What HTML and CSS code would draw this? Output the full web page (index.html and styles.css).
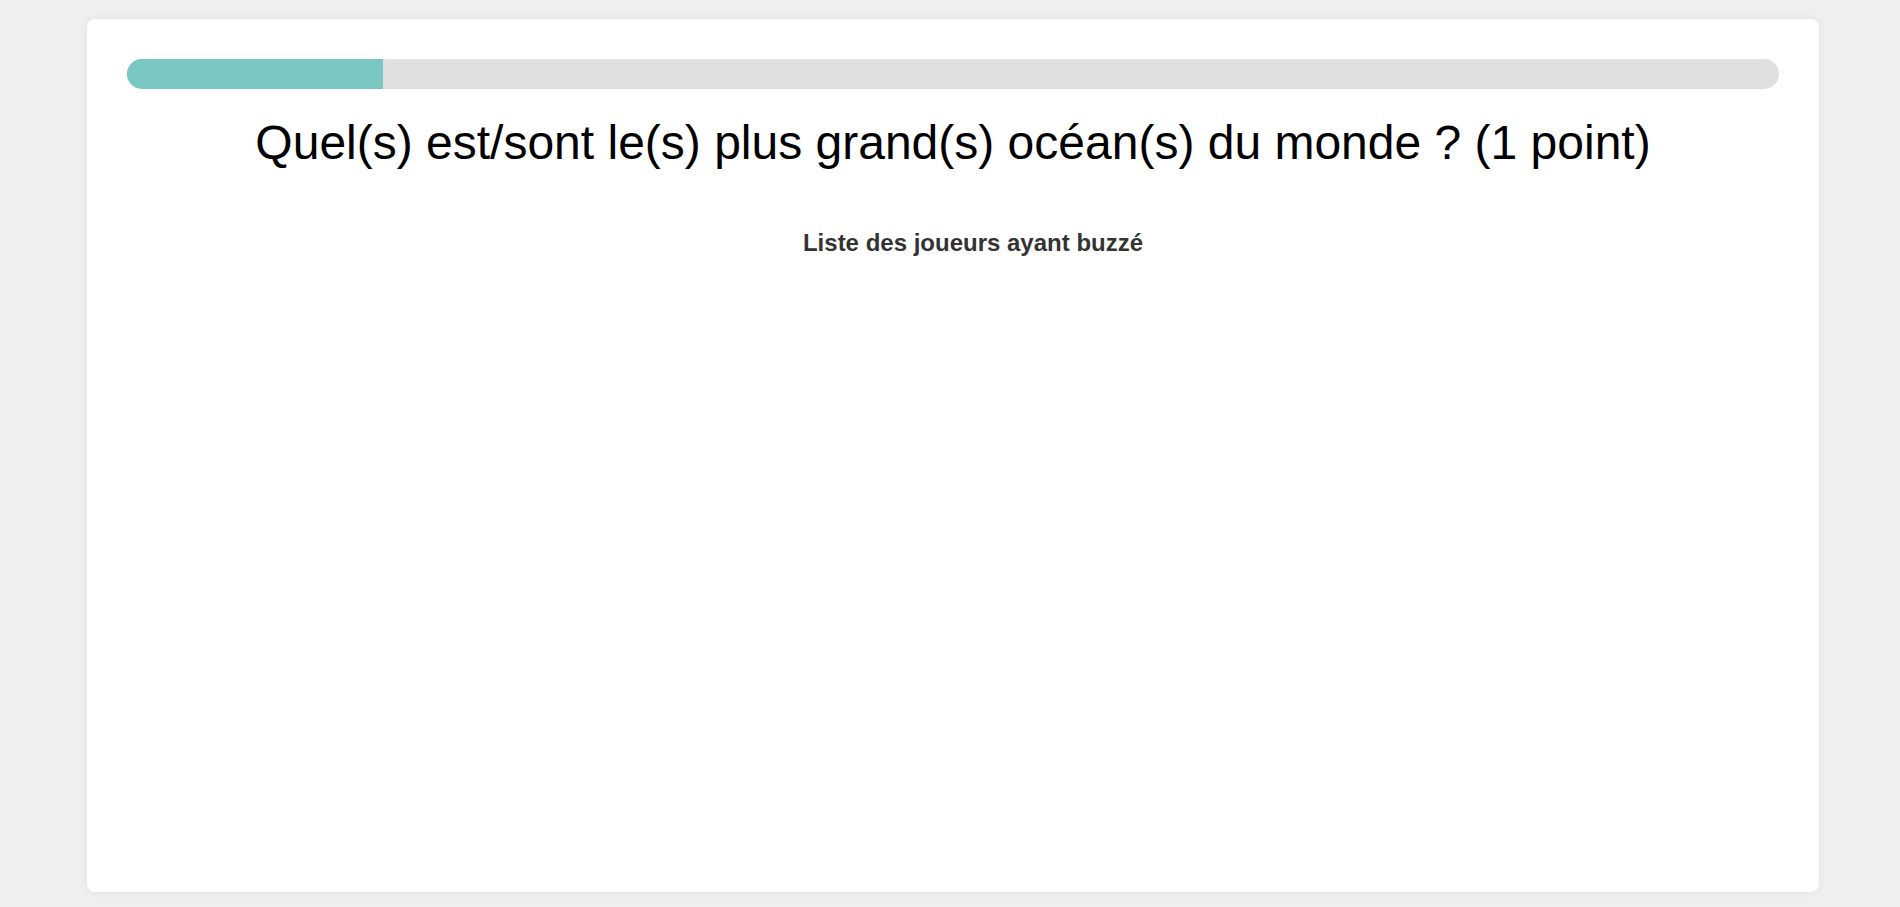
FILE: index.html
```html
<!DOCTYPE html>
<html lang="fr">
<head>
<meta charset="utf-8">
<title>Quiz</title>
<link rel="stylesheet" href="styles.css">
</head>
<body>
<main class="card">
  <div class="progress"><div class="progress-fill" style="width: 15.5%"></div></div>
  <h1 class="question">Quel(s) est/sont le(s) plus grand(s) océan(s) du monde ? (1 point)</h1>
  <section class="buzz">
    <h2 class="buzz-title">Liste des joueurs ayant buzzé</h2>
    <ul class="buzz-list"></ul>
  </section>
</main>
</body>
</html>
```
FILE: styles.css
```css
html, body {
  margin: 0;
  padding: 0;
}
body {
  background: #efefef;
  font-family: "Liberation Sans", Arial, sans-serif;
  padding: 19px 81px 15px 87px;
  box-sizing: border-box;
  height: 907px;
}
.card {
  background: #fff;
  border-radius: 8px;
  box-shadow: 0 0 10px rgba(0, 0, 0, 0.06);
  padding: 40px;
  height: 873px;
  box-sizing: border-box;
}
.progress {
  height: 30px;
  background: #e0e0e0;
  border-radius: 15px;
  overflow: hidden;
}
.progress-fill {
  height: 100%;
  background: #78c7c0;
}
.question {
  margin: 26px 0 0;
  font-size: 48px;
  font-weight: normal;
  color: #000;
  text-align: center;
  line-height: normal;
}
.buzz {
  padding-left: 40px;
}
.buzz-title {
  margin: 59px 0 0;
  font-size: 24px;
  font-weight: bold;
  color: #333;
  text-align: center;
  line-height: normal;
}
.buzz-list {
  margin: 0;
  padding: 0;
  list-style: none;
}
```
